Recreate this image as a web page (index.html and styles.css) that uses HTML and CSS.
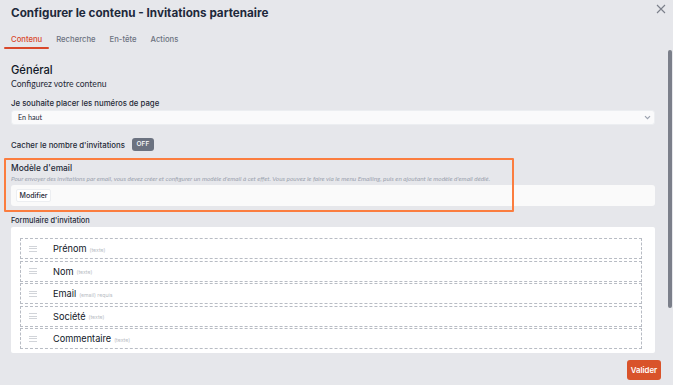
FILE: index.html
```html
<!DOCTYPE html>
<html lang="fr">
<head>
    <meta charset="UTF-8">
    <meta name="viewport" content="width=device-width, initial-scale=1.0">
    <title>Configurer le contenu</title>
    <link rel="stylesheet" href="styles.css">
</head>
<body>
    <div class="modal">
        <div class="modal-head">
            <h1>Configurer le contenu - Invitations partenaire</h1>
            <svg class="close" width="10" height="10" viewBox="0 0 10 10"><path d="M1 1 L9 9 M9 1 L1 9" stroke="#7b7f8a" stroke-width="1.1" fill="none"/></svg>
        </div>

        <div class="tabs">
            <span class="tab active">Contenu</span>
            <span class="tab">Recherche</span>
            <span class="tab">En-tête</span>
            <span class="tab">Actions</span>
        </div>

        <div class="content">
            <h2>Général</h2>
            <p class="sub">Configurez votre contenu</p>

            <label class="field-label page-label">Je souhaite placer les numéros de page</label>
            <div class="select">
                <span>En haut</span>
                <svg width="7" height="5" viewBox="0 0 7 5"><path d="M1 1.2 L3.5 3.7 L6 1.2" fill="none" stroke="#9ca3af" stroke-width="1.2"/></svg>
            </div>

            <div class="toggle-row">
                <span class="field-label">Cacher le nombre d'invitations</span>
                <span class="badge">OFF</span>
            </div>

            <div class="email-block">
                <div class="field-label email-label">Modèle d'email</div>
                <p class="hint">Pour envoyer des invitations par email, vous devez créer et configurer un modèle d'email à cet effet. Vous pouvez le faire via le menu Emailing, puis en ajoutant le modèle d'email dédié.</p>
                <div class="email-box">
                    <span class="btn-light">Modifier</span>
                </div>
                <div class="highlight"></div>
            </div>

            <div class="field-label form-title">Formulaire d'invitation</div>
            <div class="form-panel">
                <div class="row"><span class="handle"></span><span class="name">Prénom</span><span class="type">(texte)</span></div>
                <div class="row"><span class="handle"></span><span class="name">Nom</span><span class="type">(texte)</span></div>
                <div class="row"><span class="handle"></span><span class="name">Email</span><span class="type">(email) requis</span></div>
                <div class="row"><span class="handle"></span><span class="name">Société</span><span class="type">(texte)</span></div>
                <div class="row"><span class="handle"></span><span class="name">Commentaire</span><span class="type">(texte)</span></div>
            </div>
        </div>

        <div class="footer">
            <span class="btn-primary">Valider</span>
        </div>

        <div class="scrollbar"><div class="thumb"></div></div>
    </div>
</body>
</html>
```

FILE: styles.css
```css
body {
    margin: 0;
    background-color: #e6e7eb;
    font-family: "Inter", "Noto Sans", sans-serif;
    color: #1f2937;
}
.modal {
    position: relative;
    width: 673px;
    height: 385px;
    overflow: hidden;
}
.modal-head {
    display: flex;
    justify-content: space-between;
    align-items: flex-start;
    padding: 4px 7px 0 11px;
    height: 18px;
}
h1 {
    margin: 0;
    font-size: 11.7px;
    font-weight: 700;
    color: #1e293b;
    line-height: 18px;
}
.close {
    margin-top: 0;
}
.tabs {
    display: flex;
    gap: 14px;
    padding: 12px 0 0 11px;
}
.tab {
    font-size: 7.7px;
    font-weight: 500;
    color: #6b7280;
    line-height: 12px;
    padding-bottom: 3px;
    position: relative;
}
.tab.active {
    color: #d9482b;
}
.tab.active::after {
    content: "";
    position: absolute;
    left: -7px;
    right: -7px;
    bottom: 0;
    height: 2px;
    background-color: #d9482b;
    border-radius: 1px;
}
.content {
    padding: 13px 18px 0 11px;
}
h2 {
    margin: 0;
    font-size: 11.2px;
    font-weight: 500;
    line-height: 16px;
    color: #111827;
}
.sub {
    margin: 1px 0 0;
    font-family: "Lato", sans-serif;
    font-size: 8.6px;
    line-height: 10px;
    color: #1f2937;
}
.field-label {
    display: block;
    font-size: 7.8px;
    font-weight: 500;
    color: #1f2937;
    line-height: 12px;
}
.page-label {
    margin-top: 8px;
}
.select {
    margin-top: 1px;
    box-sizing: border-box;
    height: 15px;
    background-color: #fafafb;
    border: 1px solid #eceef1;
    border-radius: 3px;
    display: flex;
    align-items: center;
    justify-content: space-between;
    padding: 0 3px 0 6px;
    font-family: "Lato", sans-serif;
    font-size: 7.2px;
}
.toggle-row {
    display: flex;
    align-items: center;
    gap: 7px;
    margin-top: 13px;
    height: 13px;
}
.badge {
    background-color: #6b7280;
    color: #ffffff;
    font-size: 6.5px;
    font-weight: 500;
    border-radius: 3px;
    width: 22px;
    height: 13px;
    line-height: 13px;
    text-align: center;
}
.email-block {
    position: relative;
    margin-top: 11px;
}
.email-label {
    font-size: 8.4px;
}
.hint {
    margin: 1px 0 0;
    font-family: "Lato", sans-serif;
    font-style: italic;
    font-size: 6.4px;
    line-height: 8px;
    color: #9ca3af;
    white-space: nowrap;
}
.email-box {
    margin-top: 2px;
    height: 21px;
    box-sizing: border-box;
    background-color: #fafafa;
    border-radius: 3px;
    padding: 4px 5px;
    display: flex;
}
.btn-light {
    font-size: 7px;
    font-weight: 500;
    color: #1f2937;
    background-color: #ffffff;
    border: 1px solid #eceef1;
    border-radius: 2px;
    box-sizing: border-box;
    width: 35px;
    height: 13px;
    line-height: 11px;
    text-align: center;
}
.highlight {
    position: absolute;
    left: -7px;
    top: -4px;
    width: 510px;
    height: 54px;
    box-sizing: border-box;
    border: 2.5px solid #fb7d3f;
    border-radius: 1px;
}
.form-title {
    margin-top: 9px;
    font-size: 7.4px;
}
.form-panel {
    background-color: #ffffff;
    border-radius: 2px;
    padding: 11px 13px 4px 9px;
    display: flex;
    flex-direction: column;
    gap: 1.5px;
}
.row {
    box-sizing: border-box;
    height: 21px;
    border: 1px dashed #b8bcc4;
    display: flex;
    align-items: center;
}
.handle {
    box-sizing: border-box;
    width: 8px;
    height: 6px;
    margin: 0 16px 0 8px;
    border-top: 1px solid #d1d4d9;
    border-bottom: 1px solid #d1d4d9;
    position: relative;
}
.handle::after {
    content: "";
    position: absolute;
    left: 0;
    right: 0;
    top: 1.5px;
    height: 1px;
    background-color: #d1d4d9;
}
.name {
    font-size: 9.2px;
    color: #111827;
}
.type {
    margin-left: 3px;
    margin-top: 2px;
    font-size: 5.2px;
    color: #b8bcc4;
}
.footer {
    display: flex;
    justify-content: flex-end;
    padding: 7px 12px 0 0;
}
.btn-primary {
    background-color: #d9532a;
    color: #ffffff;
    font-size: 7.8px;
    font-weight: 600;
    border-radius: 3px;
    width: 34px;
    height: 20px;
    line-height: 20px;
    text-align: center;
}
.scrollbar {
    position: absolute;
    right: 0;
    top: 0;
    width: 5px;
    height: 385px;
}
.thumb {
    margin-top: 50px;
    width: 4px;
    height: 258px;
    background-color: #7b7f8a;
    border-radius: 2px;
}
```
